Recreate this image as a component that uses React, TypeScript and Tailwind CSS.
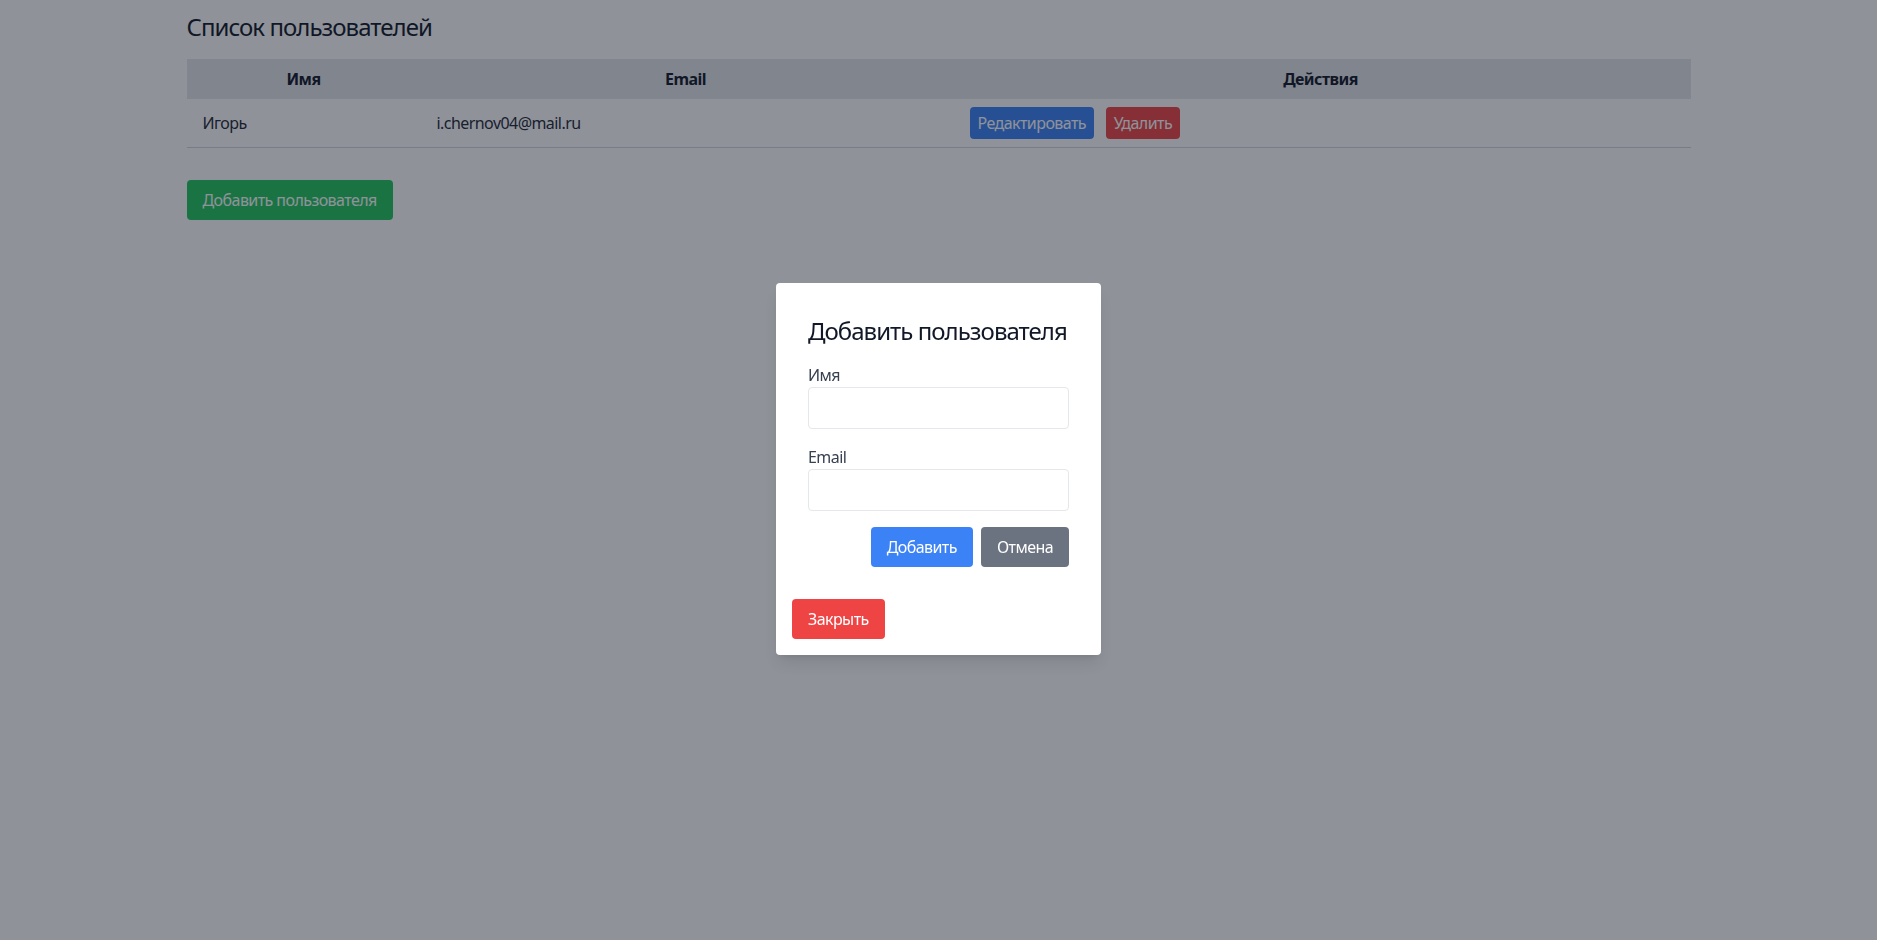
import React from 'react';

type User = { id: number; name: string; email: string };

const users: User[] = [{ id: 1, name: 'Игорь', email: 'i.chernov04@mail.ru' }];

const font = { fontFamily: '"Noto Sans", "Open Sans", sans-serif' };

export default function App() {
  return (
    <div className="min-h-screen bg-white text-[#111827] tracking-[-0.035em]" style={font}>
      <div className="container mx-auto px-4 pt-[11px]">
        <h2 className="text-2xl mb-4 tracking-[-0.04em]">Список пользователей</h2>

        <table className="w-full table-fixed border-collapse">
          <colgroup>
            <col className="w-[234px]" />
            <col className="w-[530px]" />
            <col />
          </colgroup>
          <thead>
            <tr className="bg-[#e5e7eb]">
              <th className="px-4 py-2 font-bold text-center">Имя</th>
              <th className="px-4 py-2 font-bold text-center">Email</th>
              <th className="px-4 py-2 font-bold text-center">Действия</th>
            </tr>
          </thead>
          <tbody>
            {users.map(u => (
              <tr key={u.id} className="border-b border-[#d1d5db]">
                <td className="px-4 py-2 text-[#1f2937]">{u.name}</td>
                <td className="px-4 py-2 text-[#1f2937]">{u.email}</td>
                <td className="pl-[19px] pr-4 py-2">
                  <button className="bg-[#3b82f6] text-white px-2 py-1 rounded mr-2">Редактировать</button>{' '}
                  <button className="bg-[#ef4444] text-white px-2 py-1 rounded">Удалить</button>
                </td>
              </tr>
            ))}
          </tbody>
        </table>

        <button className="mt-8 bg-[#22c55e] text-white px-4 py-2 rounded">Добавить пользователя</button>
      </div>

      {/* модальное окно */}
      <div className="fixed inset-0 bg-[rgba(17,24,39,0.47)] flex items-center justify-center">
        <div className="bg-white rounded shadow-lg p-4 w-[325px] -mt-[3px]">
          <form className="p-4">
            <h3 className="text-2xl mb-4 text-[#111827] whitespace-nowrap tracking-[-0.04em]">Добавить пользователя</h3>
            <div className="mb-4">
              <label className="block text-[#374151]">Имя</label>
              <input type="text" className="w-full border border-[#e5e7eb] rounded px-3 py-2 outline-none" />
            </div>
            <div className="mb-4">
              <label className="block text-[#374151]">Email</label>
              <input type="email" className="w-full border border-[#e5e7eb] rounded px-3 py-2 outline-none" />
            </div>
            <div className="flex justify-end gap-2">
              <button type="button" className="bg-[#3b82f6] text-white px-4 py-2 rounded">Добавить</button>
              <button type="button" className="bg-[#6b7280] text-white px-4 py-2 rounded">Отмена</button>
            </div>
          </form>
          <button className="mt-4 bg-[#ef4444] text-white px-4 py-2 rounded">Закрыть</button>
        </div>
      </div>
    </div>
  );
}
